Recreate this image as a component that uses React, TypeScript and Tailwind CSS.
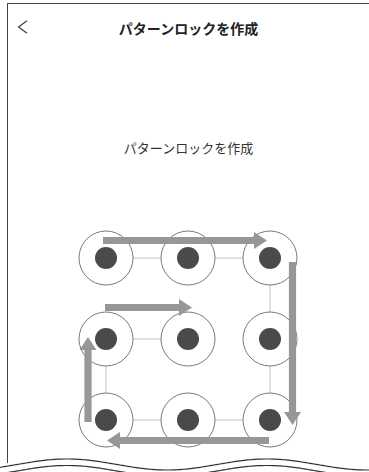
import React from "react";

const cols = [106, 188, 270];
const rows = [258, 339, 420];

// path 1→2→3→6→9→8→7→4→5, grid lines follow it
const links: [number, number][] = [
  [0, 1], [1, 2], [2, 5], [5, 8], [8, 7], [7, 6], [6, 3], [3, 4],
];

const pt = (i: number) => ({ x: cols[i % 3], y: rows[Math.floor(i / 3)] });

type Arrow = { x1: number; y1: number; x2: number; y2: number };

const arrows: Arrow[] = [
  { x1: 103, y1: 240.5, x2: 267, y2: 240.5 },
  { x1: 292.5, y1: 262, x2: 292.5, y2: 425 },
  { x1: 269, y1: 440.5, x2: 107, y2: 440.5 },
  { x1: 88, y1: 422, x2: 88, y2: 337 },
  { x1: 105, y1: 307.5, x2: 192, y2: 307.5 },
];

function arrowShape(a: Arrow) {
  const dx = Math.sign(a.x2 - a.x1);
  const dy = Math.sign(a.y2 - a.y1);
  const head = 13;
  const half = 3.6;
  const wing = 8.5;
  const bx = a.x2 - dx * head;
  const by = a.y2 - dy * head;
  const px = -dy;
  const py = dx;
  const p = [
    [a.x1 + px * half, a.y1 + py * half],
    [bx + px * half, by + py * half],
    [bx + px * wing, by + py * wing],
    [a.x2, a.y2],
    [bx - px * wing, by - py * wing],
    [bx - px * half, by - py * half],
    [a.x1 - px * half, a.y1 - py * half],
  ];
  return p.map((q) => q.join(",")).join(" ");
}

function wave(base: number) {
  let d = "";
  for (let x = 0; x <= 372; x += 2) {
    const y = base - 5.5 * Math.cos((2 * Math.PI * (x - 67)) / 200);
    d += `${x === 0 ? "M" : "L"}${x},${y.toFixed(2)} `;
  }
  return d;
}

function PatternDiagram() {
  return (
    <svg width="250" height="240" viewBox="60 220 250 240" className="block">
      {links.map(([a, b], i) => {
        const p = pt(a);
        const q = pt(b);
        return <line key={i} x1={p.x} y1={p.y} x2={q.x} y2={q.y} stroke="#c2c2c2" strokeWidth="1" />;
      })}
      {Array.from({ length: 9 }).map((_, i) => {
        const p = pt(i);
        return (
          <g key={i}>
            <circle cx={p.x} cy={p.y} r="27" fill="#fff" stroke="#7a7a7a" strokeWidth="1" />
            <circle cx={p.x} cy={p.y} r="11" fill="#4a4a4a" />
          </g>
        );
      })}
      {arrows.map((a, i) => (
        <polygon key={i} points={arrowShape(a)} fill="#979797" />
      ))}
    </svg>
  );
}

export default function App() {
  return (
    <div
      className="relative h-[472px] w-[369px] overflow-hidden bg-white"
      style={{ fontFamily: '"Noto Sans CJK JP", "Noto Sans", sans-serif' }}
    >
      <div className="ml-[7px] mt-[3px] h-[460px] border-l-[1.5px] border-t-[1.5px] border-[#444]">
        <header className="relative flex h-[48px] items-center justify-center">
          <svg className="absolute left-[9px] top-[16px]" width="12" height="14" viewBox="0 0 12 14">
            <path d="M10 0.8 L1.6 7 L10 13.2" fill="none" stroke="#444" strokeWidth="1.3" />
          </svg>
          <h1 className="text-[14px] font-bold leading-5 text-[#222]">パターンロックを作成</h1>
        </header>

        <p className="mt-[86px] text-center text-[13px] leading-5 text-[#333]">パターンロックを作成</p>

        <div className="mt-[62px] ml-[51.5px]">
          <PatternDiagram />
        </div>
      </div>

      <svg className="absolute left-0 top-0" width="369" height="472" viewBox="0 0 369 472">
        <path d={wave(464.5) + " L372,480 L0,480 Z"} fill="#fff" stroke="none" />
        <path d={wave(464.5)} fill="none" stroke="#333" strokeWidth="1.2" />
        <path d={wave(471)} fill="none" stroke="#333" strokeWidth="1.2" />
      </svg>
    </div>
  );
}
